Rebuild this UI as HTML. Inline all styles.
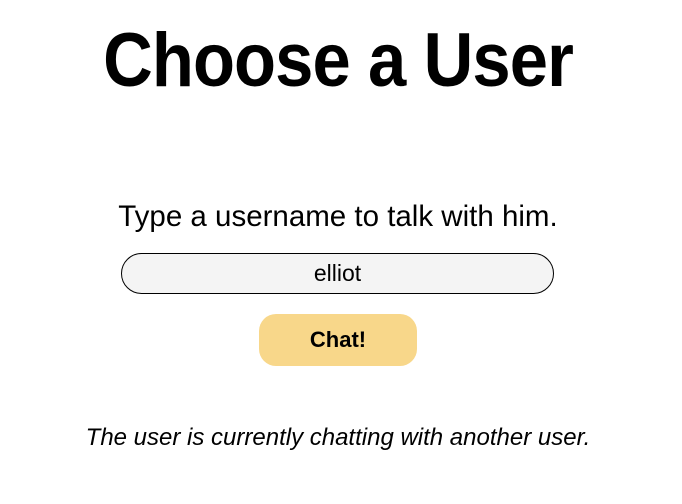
<!DOCTYPE html>
<html><head><style>
body{margin:0;width:682px;height:504px;background:#fff;font-family:"Liberation Sans",sans-serif;position:relative;overflow:hidden}
.t{position:absolute;left:0;width:682px;text-align:center;white-space:nowrap;color:#000}
h1{position:absolute;left:-3px;width:682px;margin:0;text-align:center;font-size:76px;font-weight:bold;top:16px;line-height:90px;letter-spacing:-1px;transform:scaleX(0.905)}
.inp{position:absolute;left:121px;top:253px;width:431px;height:39px;border:1px solid #000;border-radius:21px;background:#f4f4f4;text-align:center;font-size:23px;line-height:39px}
.btn{position:absolute;left:259px;top:314px;width:158px;height:52px;border-radius:17px;background:#f8d78a;text-align:center;font-size:22px;font-weight:bold;line-height:52px}
</style></head><body>
<h1>Choose a User</h1>
<div class="t" style="top:198px;left:-3px;font-size:29.5px;line-height:38px">Type a username to talk with him.</div>
<div class="inp">elliot</div>
<div class="btn">Chat!</div>
<div class="t" style="top:422px;left:-3px;font-size:24px;line-height:32px;font-style:italic">The user is currently chatting with another user.</div>
</body></html>
